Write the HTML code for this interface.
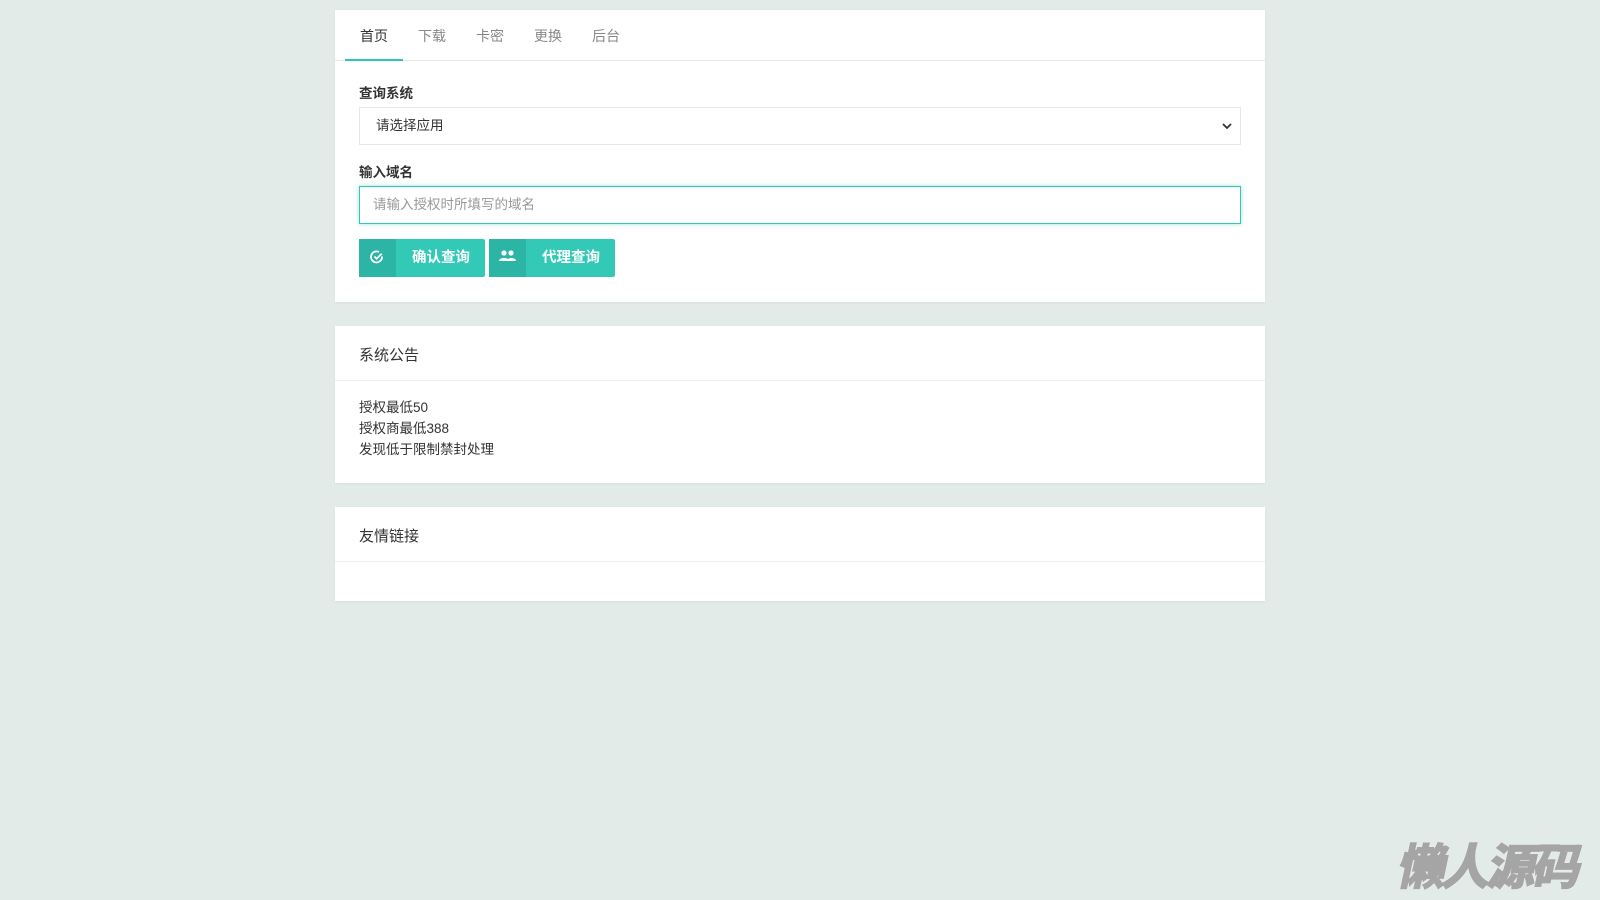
<!DOCTYPE html>
<html><head><meta charset="utf-8"><style>
*{box-sizing:border-box;margin:0;padding:0}
body{width:1600px;height:900px;background:#e3ebe9;font-family:"Liberation Sans","Noto Sans CJK SC",sans-serif;color:#555;position:relative;overflow:hidden}
.card{position:absolute;left:335px;width:930px;background:#fff;box-shadow:0 1px 2px rgba(0,0,0,.05)}
.tabs{height:51px;border-bottom:1px solid #e6e6e6;position:relative}
.tab{position:absolute;top:16px;font-size:14px;color:#888}
.tab.on{color:#333}
.ul{position:absolute;left:10px;width:58px;bottom:-1px;height:2px;background:#2ec4b6}
.lbl{position:absolute;left:24px;font-size:13.5px;font-weight:bold;color:#333}
.box{position:absolute;left:24px;width:882px;height:38px;border:1px solid #e6e6e6;font-size:13.5px;padding:0 16px;line-height:36px}
.btn{position:absolute;top:229px;height:38px;width:126px;background:#33c9b7;border-radius:2px;color:#fff;font-size:14.5px;font-weight:bold;line-height:38px}
.btn i{position:absolute;left:0;top:0;width:37px;height:38px;background:#2cb4a5}
.btn span{position:absolute;left:53px}
.hd{height:55px;border-bottom:1px solid #eee;font-size:15px;color:#333;padding:18px 0 0 24px}
.wm{position:absolute;left:1393px;top:828px;font-size:48px;font-weight:bold;color:#a5a5a5;-webkit-text-stroke:2px #a5a5a5;text-shadow:0 0 2px #fff,1px 1px 0 #fff,-1px -1px 0 #fff;letter-spacing:-3px;font-family:"Noto Sans CJK SC",sans-serif;transform:skewX(-12deg);transform-origin:left bottom}
</style></head><body>
<div class="card" style="top:10px;height:292px">
 <div class="tabs">
  <span class="tab on" style="left:25px">首页</span>
  <span class="tab" style="left:83px">下载</span>
  <span class="tab" style="left:141px">卡密</span>
  <span class="tab" style="left:199px">更换</span>
  <span class="tab" style="left:257px">后台</span>
  <div class="ul"></div>
 </div>
 <div class="lbl" style="top:72px">查询系统</div>
 <div class="box" style="top:97px;color:#333">请选择应用<svg style="position:absolute;right:8px;top:14px" width="10" height="8" viewBox="0 0 10 8"><path d="M1 2l4 4 4-4" stroke="#333" stroke-width="1.8" fill="none"/></svg></div>
 <div class="lbl" style="top:151px">输入域名</div>
 <div class="box" style="top:176px;border-color:#33c9b7;color:#999;box-shadow:0 0 4px rgba(51,201,183,.5);padding-left:13px">请输入授权时所填写的域名</div>
 <div class="btn" style="left:24px"><i><svg style="position:absolute;left:11px;top:11px" width="14" height="14" viewBox="0 0 14 14"><path d="M12 6.5A5.5 5.5 0 1 1 9 2" stroke="#fff" stroke-width="1.8" fill="none"/><path d="M4.5 6.5l2.2 2.2 5-5" stroke="#fff" stroke-width="1.8" fill="none"/></svg></i><span>确认查询</span></div>
 <div class="btn" style="left:154px"><i><svg style="position:absolute;left:10px;top:11px" width="17" height="12" viewBox="0 0 17 12"><circle cx="5" cy="3" r="2.6" fill="#fff"/><circle cx="12" cy="3" r="2.6" fill="#fff"/><path d="M0 11c0-4 10-4 10 0zM8 11c0-4 9-4 9 0z" fill="#fff"/></svg></i><span>代理查询</span></div>
</div>
<div class="card" style="top:326px;height:157px">
 <div class="hd">系统公告</div>
 <div style="padding:16px 24px;font-size:13.5px;line-height:21px;color:#333">授权最低50<br>授权商最低388<br>发现低于限制禁封处理</div>
</div>
<div class="card" style="top:507px;height:94px">
 <div class="hd">友情链接</div>
</div>
<div class="wm">懒人源码</div>
</body></html>
